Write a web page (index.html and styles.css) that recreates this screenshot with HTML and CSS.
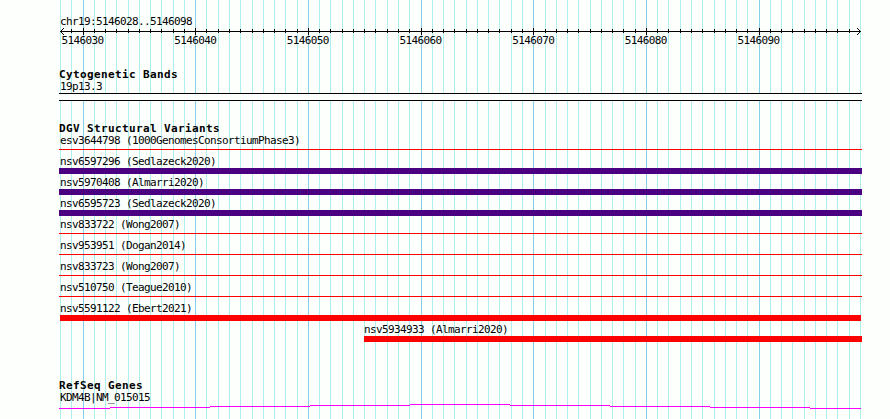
FILE: index.html
```html
<!DOCTYPE html>
<html lang="en">
<head>
	<meta charset="UTF-8">
	<title>chr19:5146028..5146098</title>
	<link rel="stylesheet" href="styles.css">
</head>
<body>
	<div class="browser">
		<svg class="grid" width="890" height="419"></svg>
		<div class="ruler">
			<p class="label">chr19:5146028..5146098</p>
			<svg class="axis" width="803" height="9">
				<path class="line" d="M1 4.5H802"/>
			</svg>
			<div class="numbers">
				<span>5146030</span><span>5146040</span><span>5146050</span><span>5146060</span><span>5146070</span><span>5146080</span><span>5146090</span>
			</div>
		</div>
		<div class="track bands">
			<h2>Cytogenetic Bands</h2>
			<p class="label">19p13.3</p>
			<div class="band"></div>
		</div>
		<div class="track variants">
			<h2>DGV Structural Variants</h2>
			<div class="item"><p class="label">esv3644798 (1000GenomesConsortiumPhase3)</p><div class="thin"></div></div>
			<div class="item"><p class="label">nsv6597296 (Sedlazeck2020)</p><div class="bar purple"></div></div>
			<div class="item"><p class="label">nsv5970408 (Almarri2020)</p><div class="bar purple"></div></div>
			<div class="item"><p class="label">nsv6595723 (Sedlazeck2020)</p><div class="bar purple"></div></div>
			<div class="item"><p class="label">nsv833722 (Wong2007)</p><div class="thin"></div></div>
			<div class="item"><p class="label">nsv953951 (Dogan2014)</p><div class="thin"></div></div>
			<div class="item"><p class="label">nsv833723 (Wong2007)</p><div class="thin"></div></div>
			<div class="item"><p class="label">nsv510750 (Teague2010)</p><div class="thin"></div></div>
			<div class="item"><p class="label">nsv5591122 (Ebert2021)</p><div class="bar red inner"></div></div>
			<div class="item short"><p class="label">nsv5934933 (Almarri2020)</p><div class="bar red"></div></div>
		</div>
		<div class="track genes">
			<h2>RefSeq Genes</h2>
			<p class="label">KDM4B|NM_015015</p>
			<svg class="intron" width="803" height="6">
				<path d="M0 4.5H51M51 3.5H151M151 2.5H251M251 1.5H351M351 .5H451M451 1.5H551M551 2.5H651M651 3.5H751M751 4.5H802"/>
			</svg>
		</div>
	</div>
	<script src="grid.js"></script>
</body>
</html>
```

FILE: styles.css
```css
*{
	margin: 0;
	padding: 0;
}
body{
	background-color: #fdfffc;
	color: #000;
	font-family: "DejaVu Sans Mono", monospace;
	overflow: hidden;
}
svg{
	display: block;
	shape-rendering: crispEdges;
}
.browser{
	position: relative;
	box-sizing: border-box;
	width: 890px;
	height: 419px;
	padding: 16px 28px 0 59px;
	overflow: hidden;
}
/* lines behind all tracks */
.grid{
	position: absolute;
	top: 0;
	left: 0;
	z-index: -1;
}
.minor{
	fill: #afeeee;
}
.major{
	fill: #87ceeb;
}
.label{
	height: 12px;
	padding-left: 1px;
	font-size: 11px;
	line-height: 12px;
	letter-spacing: -.622px;
	white-space: nowrap;
}
h2{
	height: 12px;
	font-size: 11px;
	line-height: 12px;
	letter-spacing: .378px;
	white-space: nowrap;
}
.ruler{
	height: 53px;
}
.axis{
	margin-top: -1px;
}
.line{
	fill: none;
	stroke: #000;
}
.numbers{
	display: flex;
	height: 12px;
	margin-top: -1px;
	padding-left: 2.5px;
	font-size: 11px;
	line-height: 12px;
	letter-spacing: -.622px;
}
.numbers span{
	width: 112.68px;
}
.band{
	height: 6px;
	border-top: 1px solid #000;
	border-bottom: 1px solid #000;
	background-color: #fdfffc;
}
.variants{
	margin-top: 22px;
}
.item{
	height: 21px;
}
.thin{
	height: 1px;
	margin-top: 2px;
	background-color: #f00;
}
.bar{
	height: 6px;
}
.purple{
	background-color: #4b0082;
}
.red{
	background-color: #f00;
}
.inner{
	margin-left: 1px;
	margin-right: 1px;
}
.short{
	margin-left: 305px;
}
.short .label{
	padding-left: 0;
}
.genes{
	margin-top: 35px;
}
.intron path{
	stroke: #f0f;
}
```

FILE: grid.js
```js
var grid = document.querySelector(".grid");
var axis = document.querySelector(".axis");
var step = 800 / 71;//one base

function rect(svg, x, y, h, name){
	var r = document.createElementNS("http://www.w3.org/2000/svg", "rect");
	r.setAttribute("x", x);
	r.setAttribute("y", y);
	r.setAttribute("width", 1);
	r.setAttribute("height", h);
	r.setAttribute("class", name);
	svg.appendChild(r);
}

for(var i = 0; i <= 71; i++){
	var x = Math.round(60 + i * step);
	var major = i % 10 == 2;
	rect(grid, x, 0, 419, major ? "major" : "minor");
	if(i > 0 && i < 71){
		rect(axis, x - 59, major ? 1 : 2, major ? 7 : 4, "tick");
	}
}
//arrow heads
for(var k = 0; k < 4; k++){
	rect(axis, 1 + k, 4 - k, 1, "tick");
	rect(axis, 1 + k, 4 + k, 1, "tick");
	rect(axis, 801 - k, 4 - k, 1, "tick");
	rect(axis, 801 - k, 4 + k, 1, "tick");
}
```
